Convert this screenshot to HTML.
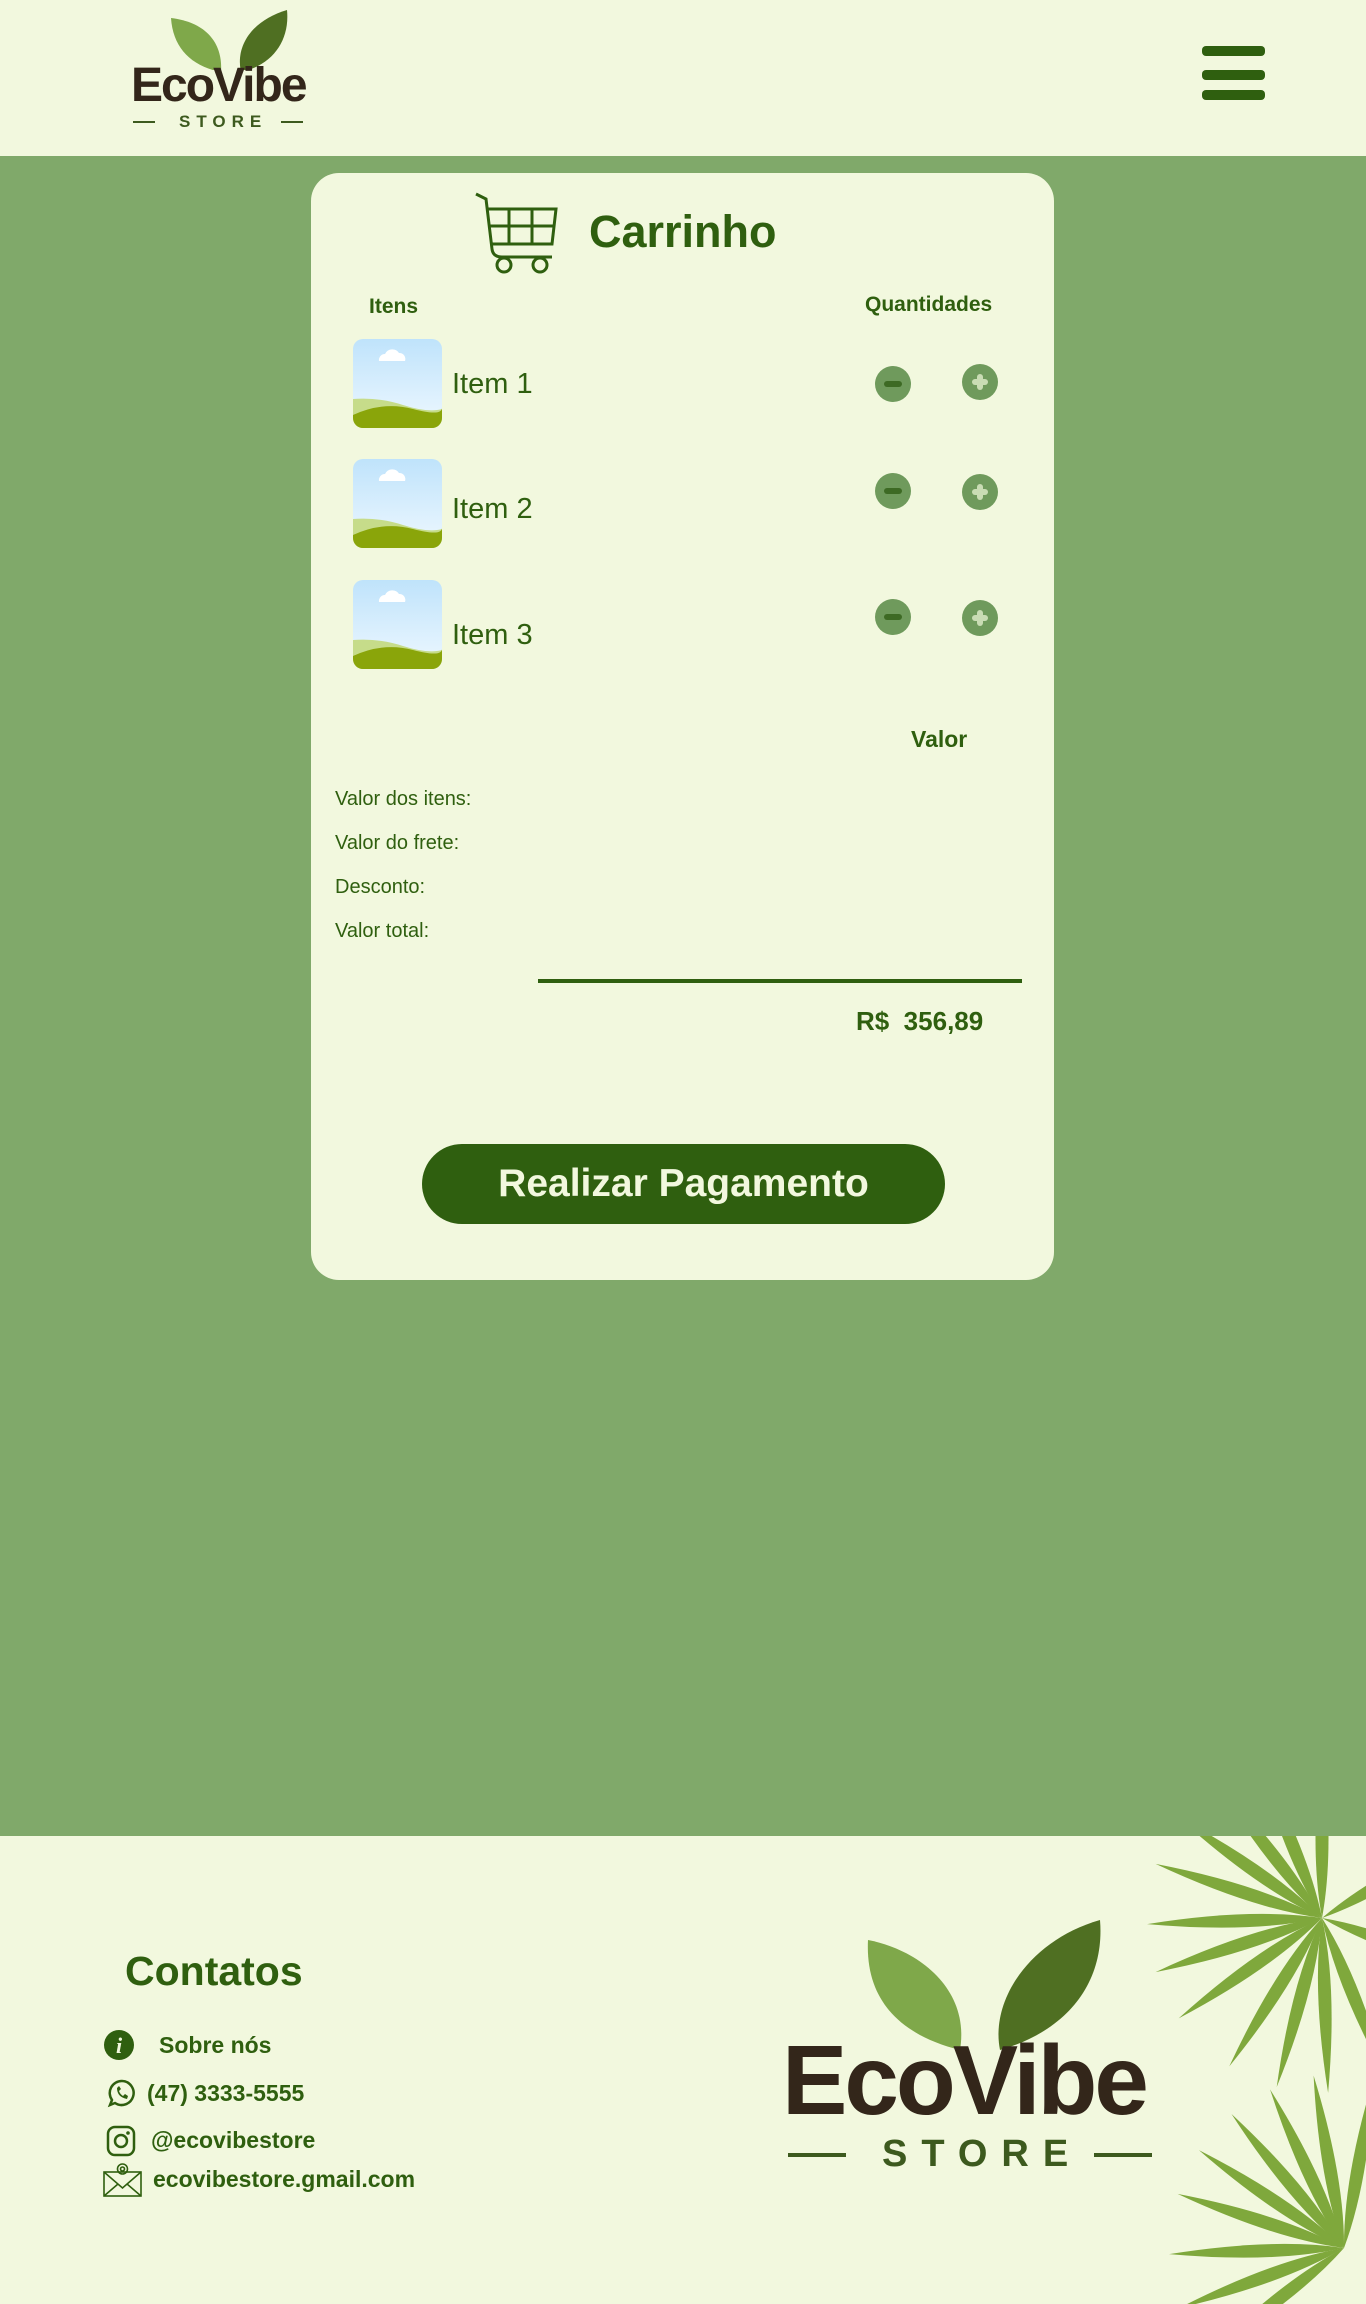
<!DOCTYPE html>
<html><head><meta charset="utf-8">
<style>
*{margin:0;padding:0;box-sizing:border-box}
body{width:1366px;height:2304px;position:relative;background:#80a96a;font-family:"Liberation Sans",sans-serif;color:#2f5f0f;overflow:hidden}
.a{position:absolute;white-space:nowrap}
.hdr{position:absolute;left:0;top:0;width:1366px;height:156px;background:#f2f8de}
.ftr{position:absolute;left:0;top:1836px;width:1366px;height:468px;background:#f2f8de;overflow:hidden}
.card{position:absolute;left:311px;top:173px;width:743px;height:1107px;background:#f2f8de;border-radius:28px}
.bar{position:absolute;left:1202px;width:63px;height:10px;border-radius:4px;background:#2f5f0f}
.img{position:absolute;left:353px;width:89px;height:89px;border-radius:10px;overflow:hidden}
.b{font-weight:bold}
.lbl{font-size:20px;left:335px}
.circ{position:absolute;width:36px;height:36px;border-radius:50%;background:#6f9a5c}
.circ i{position:absolute;left:9px;top:15px;width:18px;height:6px;border-radius:3px;background:#3d6a24}
.circ.p i{background:#c9dcb4;left:10px;top:15px;width:16px;height:6px}
.circ.p b{position:absolute;left:15px;top:10px;width:6px;height:16px;border-radius:3px;background:#c9dcb4}
</style></head><body>
<div class="hdr">
 <svg class="a" style="left:165px;top:10px" width="130" height="60" viewBox="0 0 130 60">
  <path d="M6 8 C40 12 58 32 56 62 C26 56 8 38 6 8Z" fill="#7fa84a"/>
  <path d="M122 0 C88 10 70 35 76 62 C108 55 125 30 122 0Z" fill="#4f6f22"/>
 </svg>
 <div class="a" style="left:131px;top:58px;font-size:48px;font-weight:bold;color:#33261a;letter-spacing:-2px">EcoVibe</div>
 <div class="a" style="left:133px;top:121px;width:22px;height:2px;background:#3d5a1e"></div>
 <div class="a" style="left:179px;top:112px;font-size:17px;font-weight:bold;color:#3d5a1e;letter-spacing:6px">STORE</div>
 <div class="a" style="left:281px;top:121px;width:22px;height:2px;background:#3d5a1e"></div>
 <div class="bar" style="top:46px"></div><div class="bar" style="top:70px"></div><div class="bar" style="top:90px"></div>
</div>
<div class="card"></div>
<svg class="a" style="left:474px;top:191px" width="86" height="84" viewBox="0 0 86 84">
 <g fill="none" stroke="#2f5f0f" stroke-width="3">
 <path d="M2 3 L12 8 L18 58 Q19 66 28 66 L78 66"/>
 <path d="M12 18 L82 18 L78 53 L17 53"/>
 <path d="M15 35 L80 35 M35 18 L35 53 M58 18 L58 53"/>
 <circle cx="30" cy="74" r="7"/><circle cx="66" cy="74" r="7"/>
 </g></svg>
<div class="a b" style="left:589px;top:206px;font-size:45px">Carrinho</div>
<div class="a b" style="left:369px;top:295px;font-size:21px">Itens</div>
<div class="a b" style="left:865px;top:293px;font-size:21px">Quantidades</div>

<svg width="0" height="0" style="position:absolute"><defs><linearGradient id="sky" x1="0" y1="0" x2="0" y2="1"><stop offset="0" stop-color="#bfe3fb"/><stop offset="1" stop-color="#eef8ff"/></linearGradient>
<path id="lf" d="M0 0 Q70 -13 175 0 Q70 13 0 0Z"/></defs></svg>
<div class="img" style="top:339px"><svg width="89" height="89"><rect width="89" height="89" fill="url(#sky)"/><path d="M26 22 a6 6 0 0 1 6-7 a8 8 0 0 1 14-1 a6 6 0 0 1 6 8z" fill="#fff"/><path d="M0 60 Q25 58 50 66 T89 70 V89 H0Z" fill="#c6dc8a"/><path d="M0 76 Q30 62 60 70 T89 68 V89 H0Z" fill="#8aa50a"/></svg></div>
<div class="img" style="top:459px"><svg width="89" height="89"><rect width="89" height="89" fill="url(#sky)"/><path d="M26 22 a6 6 0 0 1 6-7 a8 8 0 0 1 14-1 a6 6 0 0 1 6 8z" fill="#fff"/><path d="M0 60 Q25 58 50 66 T89 70 V89 H0Z" fill="#c6dc8a"/><path d="M0 76 Q30 62 60 70 T89 68 V89 H0Z" fill="#8aa50a"/></svg></div>
<div class="img" style="top:580px"><svg width="89" height="89"><rect width="89" height="89" fill="url(#sky)"/><path d="M26 22 a6 6 0 0 1 6-7 a8 8 0 0 1 14-1 a6 6 0 0 1 6 8z" fill="#fff"/><path d="M0 60 Q25 58 50 66 T89 70 V89 H0Z" fill="#c6dc8a"/><path d="M0 76 Q30 62 60 70 T89 68 V89 H0Z" fill="#8aa50a"/></svg></div>
<div class="a" style="left:452px;top:368px;font-size:29px">Item 1</div>
<div class="a" style="left:452px;top:493px;font-size:29px">Item 2</div>
<div class="a" style="left:452px;top:619px;font-size:29px">Item 3</div>

<div class="circ" style="left:875px;top:366px"><i></i></div><div class="circ p" style="left:962px;top:364px"><i></i><b></b></div>
<div class="circ" style="left:875px;top:473px"><i></i></div><div class="circ p" style="left:962px;top:474px"><i></i><b></b></div>
<div class="circ" style="left:875px;top:599px"><i></i></div><div class="circ p" style="left:962px;top:600px"><i></i><b></b></div>

<div class="a b" style="left:911px;top:726px;font-size:23px">Valor</div>
<div class="a lbl" style="top:788px">Valor dos itens:</div>
<div class="a lbl" style="top:832px">Valor do frete:</div>
<div class="a lbl" style="top:876px">Desconto:</div>
<div class="a lbl" style="top:920px">Valor total:</div>
<div class="a" style="left:538px;top:979px;width:484px;height:4px;background:#2f5f0f"></div>
<div class="a b" style="left:856px;top:1006px;font-size:26px">R$&nbsp; 356,89</div>
<div class="a b" style="left:422px;top:1144px;width:523px;height:80px;border-radius:40px;background:#2f5f0f;color:#f2f8de;font-size:39px;text-align:center;line-height:80px">Realizar Pagamento</div>

<div class="ftr">
 <svg class="a" style="left:1100px;top:0" width="266" height="468" viewBox="0 0 266 468">
  <g fill="#7fa83c">
   <g transform="translate(222,82)">
    <use href="#lf" transform="rotate(-112)"/><use href="#lf" transform="rotate(-128)"/>
    <use href="#lf" transform="rotate(-145)"/><use href="#lf" transform="rotate(-162)"/>
    <use href="#lf" transform="rotate(178)"/><use href="#lf" transform="rotate(162)"/>
    <use href="#lf" transform="rotate(145)"/><use href="#lf" transform="rotate(122)"/>
    <use href="#lf" transform="rotate(105)"/><use href="#lf" transform="rotate(88)"/>
    <use href="#lf" transform="rotate(68)"/><use href="#lf" transform="rotate(-90)"/>
    <use href="#lf" transform="rotate(-30)"/><use href="#lf" transform="rotate(20)"/>
   </g>
   <g transform="translate(244,412)">
    <use href="#lf" transform="rotate(-100)"/><use href="#lf" transform="rotate(-115)"/>
    <use href="#lf" transform="rotate(-130)"/><use href="#lf" transform="rotate(-146)"/>
    <use href="#lf" transform="rotate(-162)"/><use href="#lf" transform="rotate(178)"/>
    <use href="#lf" transform="rotate(160)"/><use href="#lf" transform="rotate(142)"/>
    <use href="#lf" transform="rotate(-80)"/>
   </g>
  </g></svg>
 <div class="a b" style="left:125px;top:112px;font-size:41px">Contatos</div>
 <svg class="a" style="left:103px;top:193px" width="32" height="32"><circle cx="16" cy="16" r="15" fill="#2f5f0f"/><text x="16" y="24" font-family="Liberation Serif" font-style="italic" font-weight="bold" font-size="22" fill="#f2f8de" text-anchor="middle">i</text></svg>
 <div class="a b" style="left:159px;top:196px;font-size:23px">Sobre nós</div>
 <svg class="a" style="left:107px;top:242px" width="30" height="30" viewBox="0 0 30 30"><path d="M15 3 A12 12 0 1 1 8 25 L3 27 L5 22 A12 12 0 0 1 15 3Z" fill="none" stroke="#2f5f0f" stroke-width="2.5"/><path d="M10 10 Q10 19 20 21 L21 18 L18 16 L16 18 Q13 16 12 13 L14 11 L12 8Z" fill="#2f5f0f"/></svg>
 <div class="a b" style="left:147px;top:244px;font-size:23px">(47) 3333-5555</div>
 <svg class="a" style="left:106px;top:289px" width="30" height="32" viewBox="0 0 30 32"><rect x="2" y="2" width="26" height="28" rx="7" fill="none" stroke="#2f5f0f" stroke-width="2.5"/><circle cx="15" cy="16" r="6" fill="none" stroke="#2f5f0f" stroke-width="2.5"/><circle cx="22" cy="8" r="1.8" fill="#2f5f0f"/></svg>
 <div class="a b" style="left:151px;top:291px;font-size:23px">@ecovibestore</div>
 <svg class="a" style="left:103px;top:326px" width="40" height="36" viewBox="0 0 40 36"><g fill="none" stroke="#2f5f0f" stroke-width="1.6"><rect x="1" y="10" width="37" height="24"/><path d="M1 10 L19.5 26 L38 10 M1 34 L15 22 M38 34 L24 22"/><circle cx="19.5" cy="7" r="5"/><circle cx="19.5" cy="7" r="2"/></g></svg>
 <div class="a b" style="left:153px;top:330px;font-size:23px">ecovibestore.gmail.com</div>
 <svg class="a" style="left:860px;top:84px" width="250" height="130" viewBox="0 0 250 130">
  <path d="M8 20 C60 30 110 70 100 130 C40 115 5 80 8 20Z" fill="#7fa84a"/>
  <path d="M240 0 C170 20 130 80 140 130 C210 110 245 60 240 0Z" fill="#4f6f22"/>
 </svg>
 <div class="a" style="left:782px;top:188px;font-size:98px;font-weight:bold;color:#33261a;letter-spacing:-3px">EcoVibe</div>
 <div class="a" style="left:788px;top:317px;width:58px;height:4px;background:#3d5a1e"></div>
 <div class="a b" style="left:882px;top:297px;font-size:38px;color:#3d5a1e;letter-spacing:14px">STORE</div>
 <div class="a" style="left:1094px;top:317px;width:58px;height:4px;background:#3d5a1e"></div>
</div>
</body></html>
